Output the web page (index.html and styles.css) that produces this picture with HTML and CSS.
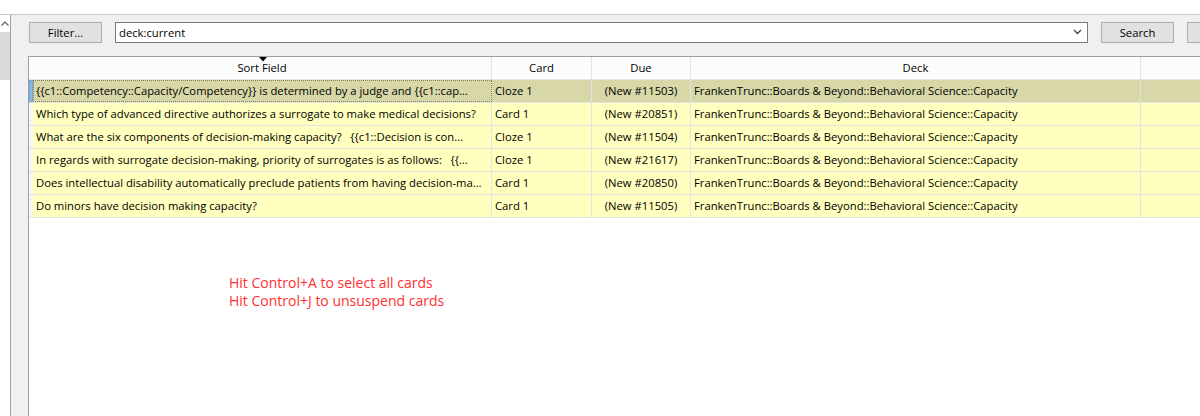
FILE: index.html
```html
<!DOCTYPE html>
<html>
<head>
<meta charset="utf-8">
<link rel="stylesheet" href="styles.css">
</head>
<body>
<div class="topstrip"></div>
<div class="window">
  <div class="sidebar">
    <div class="sb-arrow">
      <svg width="10" height="8" viewBox="0 0 10 8"><polyline points="1.5,5.5 5,2 8.5,5.5" fill="none" stroke="#606060" stroke-width="1.2"/></svg>
    </div>
    <div class="sb-thumb"></div>
  </div>
  <div class="main">
    <div class="toolbar">
      <div class="btn">Filter...</div>
      <div class="search">
        <span class="search-text">deck:current</span>
        <svg class="chev" width="9" height="6" viewBox="0 0 9 6"><polyline points="1,1 4.5,4.5 8,1" fill="none" stroke="#404040" stroke-width="1.3"/></svg>
      </div>
      <div class="btn">Search</div>
      <div class="btn"></div>
    </div>
    <div class="table">
      <div class="row header">
        <div class="rh"></div>
        <div class="cell hc sorted">Sort Field<svg class="sort-ind" width="8" height="5" viewBox="0 0 8 5"><polygon points="0,0 8,0 4,4.5" fill="#000"/></svg></div>
        <div class="cell hc">Card</div>
        <div class="cell hc">Due</div>
        <div class="cell hc">Deck</div>
        <div class="cell hc"></div>
      </div>
      <div class="row sel">
        <div class="rh"></div>
        <div class="cell focus">{{c1::Competency::Capacity/Competency}} is determined by a judge and {{c1::cap…</div>
        <div class="cell">Cloze 1</div>
        <div class="cell due">(New #11503)</div>
        <div class="cell">FrankenTrunc::Boards &amp; Beyond::Behavioral Science::Capacity</div>
        <div class="cell"></div>
      </div>
      <div class="row">
        <div class="rh"></div>
        <div class="cell">Which type of advanced directive authorizes a surrogate to make medical decisions?</div>
        <div class="cell">Card 1</div>
        <div class="cell due">(New #20851)</div>
        <div class="cell">FrankenTrunc::Boards &amp; Beyond::Behavioral Science::Capacity</div>
        <div class="cell"></div>
      </div>
      <div class="row">
        <div class="rh"></div>
        <div class="cell">What are the six components of decision-making capacity? &nbsp; {{c1::Decision is con…</div>
        <div class="cell">Cloze 1</div>
        <div class="cell due">(New #11504)</div>
        <div class="cell">FrankenTrunc::Boards &amp; Beyond::Behavioral Science::Capacity</div>
        <div class="cell"></div>
      </div>
      <div class="row">
        <div class="rh"></div>
        <div class="cell">In regards with surrogate decision-making, priority of surrogates is as follows: &nbsp; {{…</div>
        <div class="cell">Cloze 1</div>
        <div class="cell due">(New #21617)</div>
        <div class="cell">FrankenTrunc::Boards &amp; Beyond::Behavioral Science::Capacity</div>
        <div class="cell"></div>
      </div>
      <div class="row">
        <div class="rh"></div>
        <div class="cell">Does intellectual disability automatically preclude patients from having decision-ma…</div>
        <div class="cell">Card 1</div>
        <div class="cell due">(New #20850)</div>
        <div class="cell">FrankenTrunc::Boards &amp; Beyond::Behavioral Science::Capacity</div>
        <div class="cell"></div>
      </div>
      <div class="row">
        <div class="rh"></div>
        <div class="cell">Do minors have decision making capacity?</div>
        <div class="cell">Card 1</div>
        <div class="cell due">(New #11505)</div>
        <div class="cell">FrankenTrunc::Boards &amp; Beyond::Behavioral Science::Capacity</div>
        <div class="cell"></div>
      </div>
      <div class="note">
        <div>Hit Control+A to select all cards</div>
        <div>Hit Control+J to unsuspend cards</div>
      </div>
    </div>
  </div>
</div>
</body>
</html>
```

FILE: styles.css
```css
* { box-sizing: border-box; }
html, body {
  margin: 0;
  padding: 0;
  width: 1200px;
  height: 416px;
  overflow: hidden;
  background: #f0f0f0;
  font-family: "Open Sans", "Noto Sans", sans-serif;
  font-size: 11.25px;
  color: #000;
}
.topstrip {
  height: 15px;
  background: #ffffff;
  border-bottom: 1px solid #c8c8c8;
}
.window {
  display: flex;
  height: 401px;
}
.sidebar {
  width: 11px;
  flex: none;
  background: #ffffff;
  border-right: 1px solid #a0a0a0;
  display: flex;
  flex-direction: column;
}
.sb-arrow {
  height: 17px;
  display: flex;
  align-items: center;
  justify-content: center;
}
.sb-thumb {
  height: 48px;
  background: #dadada;
}
.main {
  flex: 1;
  min-width: 0;
  overflow: hidden;
  padding: 7px 0 0 17px;
  display: flex;
  flex-direction: column;
}
.toolbar {
  display: flex;
  gap: 13px;
  height: 21px;
  margin-left: 1px;
  flex: none;
}
.btn {
  flex: none;
  width: 73px;
  height: 21px;
  border: 1px solid #adadad;
  background: #e1e1e1;
  display: flex;
  align-items: center;
  justify-content: center;
  padding-bottom: 1px;
}
.search {
  flex: none;
  width: 973px;
  height: 21px;
  border: 1px solid #7a7a7a;
  background: #ffffff;
  display: flex;
  align-items: center;
  justify-content: space-between;
  padding: 0 5px 1px 3px;
}
.table {
  flex: 1;
  margin-top: 13px;
  border-top: 1px solid #a0a0a0;
  border-left: 1px solid #a0a0a0;
  background: #ffffff;
  width: 1300px;
}
.row {
  display: grid;
  grid-template-columns: 4px 459px 100px 99px 450px 1fr;
  height: 23px;
  border-bottom: 1px solid #e3e3e3;
  background: #ffffbf;
}
.row .rh {
  background: #f7f7f7;
}
.cell {
  border-right: 1px solid #e3e3e3;
  padding: 0 3px 1px;
  white-space: nowrap;
  overflow: hidden;
  display: flex;
  align-items: center;
}
.due { justify-content: center; }
.header {
  background: #fcfcfc;
  border-bottom: 1px solid #e3e3e3;
}
.header .rh { background: #fcfcfc; }
.hc {
  justify-content: center;
  position: relative;
}
.sort-ind {
  position: absolute;
  top: 0;
  left: 226px;
}
.sel { background: #d8d7a8; }
.sel .rh {
  background: #8ab9e6;
  border: 1px solid #6ea6dc;
}
.focus {
  outline: 1px dotted #808060;
  outline-offset: -1px;
}
.note {
  margin: 56px 0 0 200px;
  color: #ff3030;
  font-size: 14px;
  line-height: 18px;
}
```
